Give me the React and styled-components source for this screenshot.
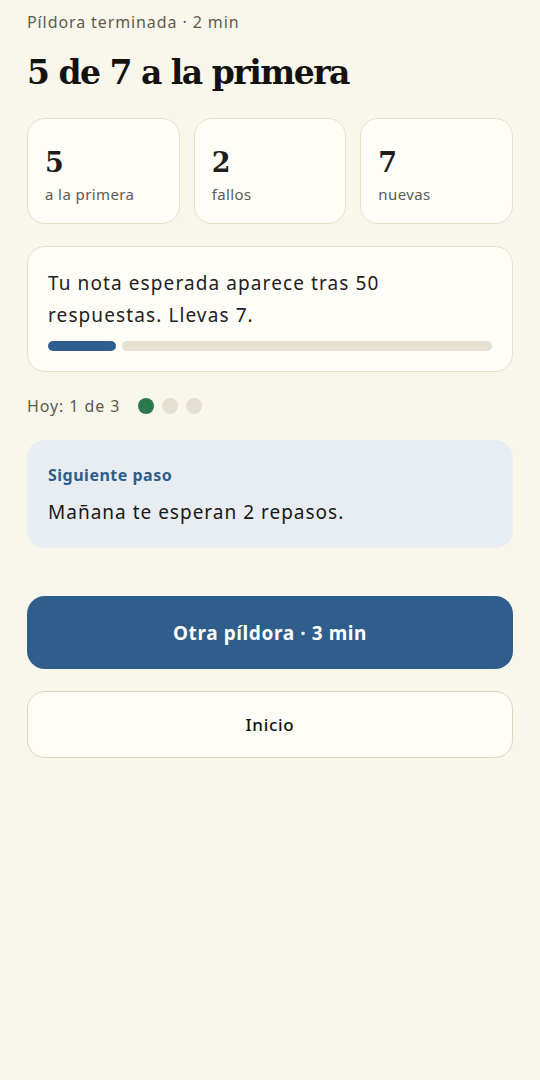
import React from "react";
import styled, { createGlobalStyle } from "styled-components";

const Global = createGlobalStyle`
  html, body { margin: 0; padding: 0; background: #f9f6ec; }
  body { font-family: "Noto Sans", "Open Sans", sans-serif; color: #1f1d1a; }
  * { box-sizing: border-box; }
`;

const Page = styled.main`
  width: 540px;
  min-height: 1080px;
  background: #f9f6ec;
  padding: 10px 27px 40px;
  display: flex;
  flex-direction: column;
`;

const Eyebrow = styled.div`
  font-size: 16px;
  line-height: 24px;
  letter-spacing: 0.9px;
  color: #5e5a50;
`;

const Title = styled.h1`
  margin: 17px 0 0;
  font-family: "DejaVu Serif", "Liberation Serif", serif;
  font-weight: 700;
  font-size: 33px;
  line-height: 44px;
  letter-spacing: -1.5px;
  color: #14120f;
`;

const Card = styled.section`
  background: #fffdf8;
  border: 1.5px solid #e6dfcb;
  border-radius: 18px;
`;

const StatRow = styled.div`
  margin-top: 23px;
  display: grid;
  grid-template-columns: repeat(3, 1fr);
  gap: 14px;
`;

const Stat = styled(Card)`
  height: 106px;
  padding: 28px 17px 0;
  display: flex;
  flex-direction: column;
`;

const StatValue = styled.div`
  font-family: "DejaVu Serif", "Liberation Serif", serif;
  font-weight: 700;
  font-size: 27px;
  line-height: 32px;
  color: #1f1d1a;
`;

const StatLabel = styled.div`
  margin-top: 5px;
  font-size: 15px;
  line-height: 20px;
  letter-spacing: 0.4px;
  color: #5e5a50;
`;

const NoteCard = styled(Card)`
  margin-top: 22px;
  padding: 20px 20px 20px 20px;
`;

const NoteText = styled.p`
  margin: 0;
  font-size: 19px;
  line-height: 32px;
  letter-spacing: 1.1px;
  color: #23211d;
`;

const Progress = styled.div`
  margin-top: 10px;
  display: flex;
  gap: 6px;
  height: 10px;
`;

const Segment = styled.div`
  height: 10px;
  border-radius: 5px;
  background: ${(p) => (p.$filled ? "#2e5d8f" : "#e8e0d0")};
  flex: ${(p) => (p.$filled ? "0 0 auto" : "1 1 auto")};
`;

const TodayRow = styled.div`
  margin-top: 23px;
  display: flex;
  align-items: center;
  gap: 8px;
  height: 22px;
`;

const TodayLabel = styled.span`
  font-size: 16px;
  letter-spacing: 0.9px;
  color: #5e5a50;
  margin-right: 10px;
`;

const Dot = styled.span`
  width: 16px;
  height: 16px;
  border-radius: 50%;
  background: ${(p) => (p.$done ? "#2a7a4e" : "#e4dfd2")};
`;

const NextBox = styled.section`
  margin-top: 23px;
  background: #e8edf4;
  border-radius: 18px;
  padding: 23px 21px 22px;
`;

const NextLabel = styled.div`
  font-size: 16px;
  font-weight: 700;
  line-height: 24px;
  letter-spacing: 0.5px;
  color: #2f5d8a;
`;

const NextText = styled.div`
  margin-top: 11px;
  font-size: 19px;
  line-height: 28px;
  letter-spacing: 1px;
  color: #1a1815;
`;

const Actions = styled.div`
  margin-top: 48px;
  display: flex;
  flex-direction: column;
  gap: 22px;
`;

const Button = styled.button`
  width: 100%;
  border-radius: 18px;
  font-family: "Noto Sans", "Open Sans", sans-serif;
  cursor: pointer;
  height: ${(p) => (p.$primary ? "73px" : "67px")};
  background: ${(p) => (p.$primary ? "#2f5d8c" : "#fffdf8")};
  color: ${(p) => (p.$primary ? "#ffffff" : "#111")};
  border: ${(p) => (p.$primary ? "none" : "1.5px solid #ddd5c0")};
  font-size: ${(p) => (p.$primary ? "19px" : "17px")};
  font-weight: ${(p) => (p.$primary ? 700 : 500)};
  letter-spacing: ${(p) => (p.$primary ? "0.6px" : "0.7px")};
`;

export default function App() {
  const stats = [
    { value: "5", label: "a la primera" },
    { value: "2", label: "fallos" },
    { value: "7", label: "nuevas" },
  ];
  return (
    <>
      <Global />
      <Page>
        <Eyebrow>Píldora terminada · 2 min</Eyebrow>
        <Title>5 de 7 a la primera</Title>
        <StatRow>
          {stats.map((s) => (
            <Stat key={s.label}>
              <StatValue>{s.value}</StatValue>
              <StatLabel>{s.label}</StatLabel>
            </Stat>
          ))}
        </StatRow>
        <NoteCard>
          <NoteText>
            Tu nota esperada aparece tras 50
            <br />
            respuestas. Llevas 7.
          </NoteText>
          <Progress>
            <Segment $filled style={{ width: "68px" }} />
            <Segment />
          </Progress>
        </NoteCard>
        <TodayRow>
          <TodayLabel>Hoy: 1 de 3</TodayLabel>
          <Dot $done />
          <Dot />
          <Dot />
        </TodayRow>
        <NextBox>
          <NextLabel>Siguiente paso</NextLabel>
          <NextText>Mañana te esperan 2 repasos.</NextText>
        </NextBox>
        <Actions>
          <Button $primary>Otra píldora · 3 min</Button>
          <Button>Inicio</Button>
        </Actions>
      </Page>
    </>
  );
}
